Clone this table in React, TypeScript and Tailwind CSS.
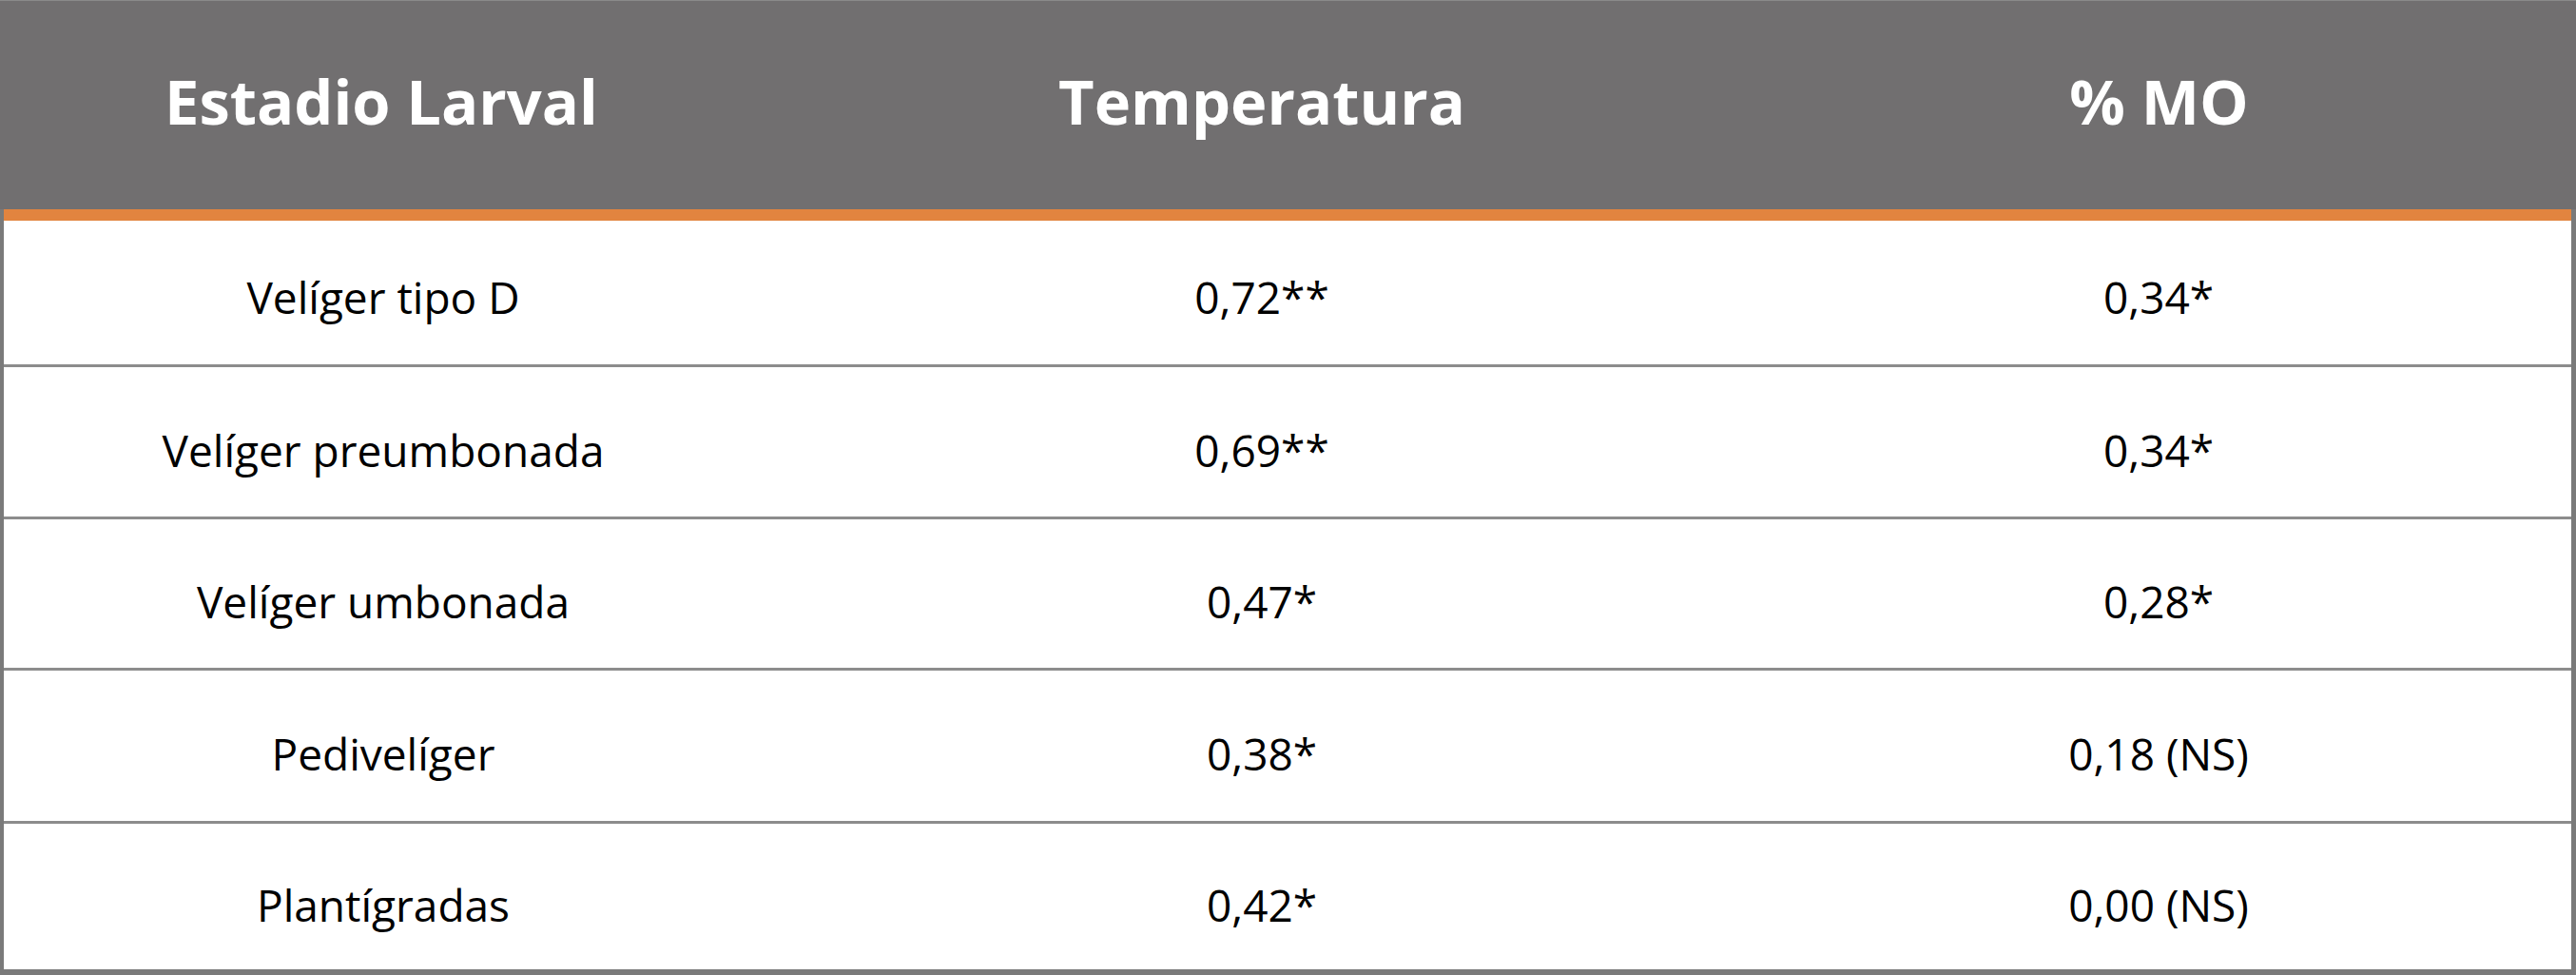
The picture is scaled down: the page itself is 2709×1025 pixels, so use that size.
import React from 'react';

// Table rows: stage, temperature correlation, % organic matter correlation
const rows: { stage: string; temp: string; mo: string; cls: string }[] = [
  { stage: 'Velíger tipo D', temp: '0,72**', mo: '0,34*', cls: 'h-[154px] pt-[9px]' },
  { stage: 'Velíger preumbonada', temp: '0,69**', mo: '0,34*', cls: 'h-[160px] pt-[16px]' },
  { stage: 'Velíger umbonada', temp: '0,47*', mo: '0,28*', cls: 'h-[159px] pt-[16px]' },
  { stage: 'Pedivelíger', temp: '0,38*', mo: '0,18 (NS)', cls: 'h-[161px] pt-[16px]' },
  { stage: 'Plantígradas', temp: '0,42*', mo: '0,00 (NS)', cls: 'flex-1 pt-[16px]' },
];

const App: React.FC = () => {
  return (
    <div className="w-[2709px] h-[1025px] bg-white flex flex-col font-['Open_Sans',_sans-serif] text-black">
      {/* Header */}
      <div className="h-[220px] shrink-0 bg-[#716f70] border-t border-[#8a8a8a] grid grid-cols-[802px_1050px_1fr] items-center pb-2 text-white font-bold text-[65px] leading-none">
        <div className="text-center">Estadio Larval</div>
        <div className="text-center">Temperatura</div>
        <div className="text-center pr-[20px]">% MO</div>
      </div>

      {/* Body */}
      <div className="flex-1 flex flex-col border-l-4 border-r-[5px] border-b-[6px] border-[#7a7a7a]">
        <div className="h-[12px] shrink-0 bg-[#e2843f]" />
        <div className="flex-1 flex flex-col divide-y-[3px] divide-[#8c8c8c]">
          {rows.map((r) => (
            <div
              key={r.stage}
              className={`${r.cls} shrink-0 grid grid-cols-[798px_1050px_1fr] items-center text-[46px] leading-none`}
            >
              <div className="text-center">{r.stage}</div>
              <div className="text-center">{r.temp}</div>
              <div className="text-center pr-[16px]">{r.mo}</div>
            </div>
          ))}
        </div>
      </div>
    </div>
  );
};

export default App;
